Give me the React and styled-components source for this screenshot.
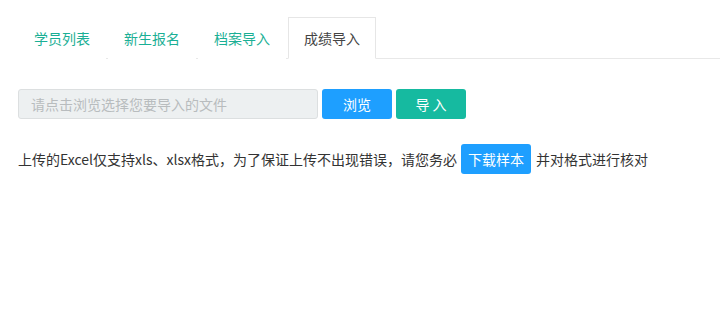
import React from 'react';
import styled, { createGlobalStyle } from 'styled-components';

const GlobalStyle = createGlobalStyle`
  body {
    margin: 0;
    background: #fff;
    font-family: "Noto Sans CJK SC", "Noto Sans", sans-serif;
    font-size: 14px;
    color: #333;
  }
`;

const Page = styled.div`
  padding: 17px 0 0 18px;
`;

const Tabs = styled.ul`
  display: flex;
  margin: 0;
  padding: 0;
  list-style: none;
  border-bottom: 1px solid #e8e8e8;
`;

const Tab = styled.li`
  margin: 0 2px -1px 0;
  padding: 10px 15px;
  line-height: 20px;
  border: 1px solid ${(p) => (p.active ? '#e6e6e6' : 'transparent')};
  border-bottom-color: ${(p) => (p.active ? '#fff' : 'transparent')};
  background: #fff;
  color: ${(p) => (p.active ? '#444' : '#1aaf95')};
  cursor: pointer;
`;

const UploadRow = styled.div`
  display: flex;
  gap: 4px;
  margin-top: 30px;
`;

const FileInput = styled.input`
  box-sizing: border-box;
  width: 300px;
  height: 30px;
  padding: 0 12px;
  border: 1px solid #dcdfe0;
  border-radius: 3px;
  background: #edf0f1;
  font: inherit;
  font-size: 14px;
  color: #333;
  outline: none;
  &::placeholder {
    color: #b8bcbe;
  }
`;

const Button = styled.button`
  box-sizing: border-box;
  width: ${(p) => p.width || 70}px;
  height: 30px;
  padding: 0;
  border: none;
  border-radius: 3px;
  background: ${(p) => (p.green ? '#16baa0' : '#1e9fff')};
  color: #fff;
  font: inherit;
  font-size: 14px;
  cursor: pointer;
`;

const Notice = styled.p`
  display: flex;
  align-items: center;
  margin: 25px 0 0;
  line-height: 30px;
  color: #333;
`;

const SampleButton = styled(Button)`
  margin: 0 5px 0 4px;
`;

const App = () => (
  <Page>
    <GlobalStyle />
    <Tabs>
      <Tab>学员列表</Tab>
      <Tab>新生报名</Tab>
      <Tab>档案导入</Tab>
      <Tab active>成绩导入</Tab>
    </Tabs>
    <UploadRow>
      <FileInput readOnly placeholder="请点击浏览选择您要导入的文件" />
      <Button>浏览</Button>
      <Button green>导 入</Button>
    </UploadRow>
    <Notice>
      上传的Excel仅支持xls、xlsx格式，为了保证上传不出现错误，请您务必
      <SampleButton>下载样本</SampleButton>
      并对格式进行核对
    </Notice>
  </Page>
);

export default App;
